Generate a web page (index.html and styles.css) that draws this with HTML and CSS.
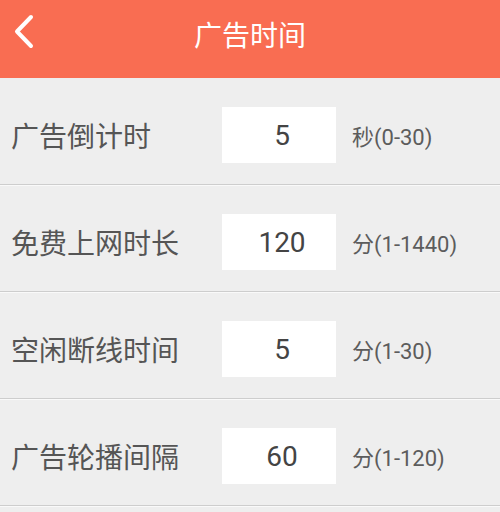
FILE: index.html
```html
<!DOCTYPE html>
<html lang="zh-CN">
<head>
<meta charset="utf-8">
<title>广告时间</title>
<link rel="stylesheet" href="styles.css">
</head>
<body>
<header class="topbar">
  <div class="back">
    <svg class="back-icon" width="24" height="36" viewBox="0 0 24 36"><path d="M19 3 L5 17.5 L19 32" fill="none" stroke="#fff" stroke-width="4" stroke-linecap="round" stroke-linejoin="round"/></svg>
  </div>
  <h1 class="title">广告时间</h1>
  <div class="spacer"></div>
</header>
<main class="list">
  <div class="row">
    <span class="label">广告倒计时</span>
    <span class="box">5</span>
    <span class="unit">秒(0-30)</span>
  </div>
  <div class="row">
    <span class="label">免费上网时长</span>
    <span class="box">120</span>
    <span class="unit">分(1-1440)</span>
  </div>
  <div class="row">
    <span class="label">空闲断线时间</span>
    <span class="box">5</span>
    <span class="unit">分(1-30)</span>
  </div>
  <div class="row">
    <span class="label">广告轮播间隔</span>
    <span class="box">60</span>
    <span class="unit">分(1-120)</span>
  </div>
</main>
</body>
</html>
```
FILE: styles.css
```css
html, body {
  margin: 0;
  padding: 0;
}
body {
  width: 500px;
  height: 512px;
  overflow: hidden;
  background: #eeeeee;
  font-family: Roboto, "Noto Sans CJK SC", sans-serif;
}
.topbar {
  height: 78px;
  background: #f96d52;
  display: grid;
  grid-template-columns: 1fr auto 1fr;
  align-items: start;
}
.back {
  padding: 14px 0 0 12px;
}
.back-icon {
  display: block;
}
.title {
  margin: 0;
  padding-top: 14px;
  font-family: "Noto Sans CJK SC", sans-serif;
  font-weight: normal;
  font-size: 28px;
  line-height: 40px;
  color: #ffffff;
}
.row {
  box-sizing: border-box;
  height: 107px;
  padding-top: 8px;
  display: flex;
  align-items: center;
  border-bottom: 1px solid #cdcdcd;
  box-shadow: 0 1px 0 #f9f9f9;
}
.label {
  width: 211px;
  padding-left: 11px;
  font-family: "Noto Sans CJK SC", sans-serif;
  font-size: 28px;
  color: #555555;
  white-space: nowrap;
}
.box {
  box-sizing: border-box;
  width: 114px;
  height: 56px;
  padding-left: 6px;
  background: #ffffff;
  display: flex;
  align-items: center;
  justify-content: center;
  font-family: Roboto, sans-serif;
  font-size: 28px;
  color: #444444;
}
.unit {
  margin-left: 16px;
  font-family: Roboto, "Noto Sans CJK SC", sans-serif;
  font-size: 22px;
  color: #5c5c5c;
}
```
